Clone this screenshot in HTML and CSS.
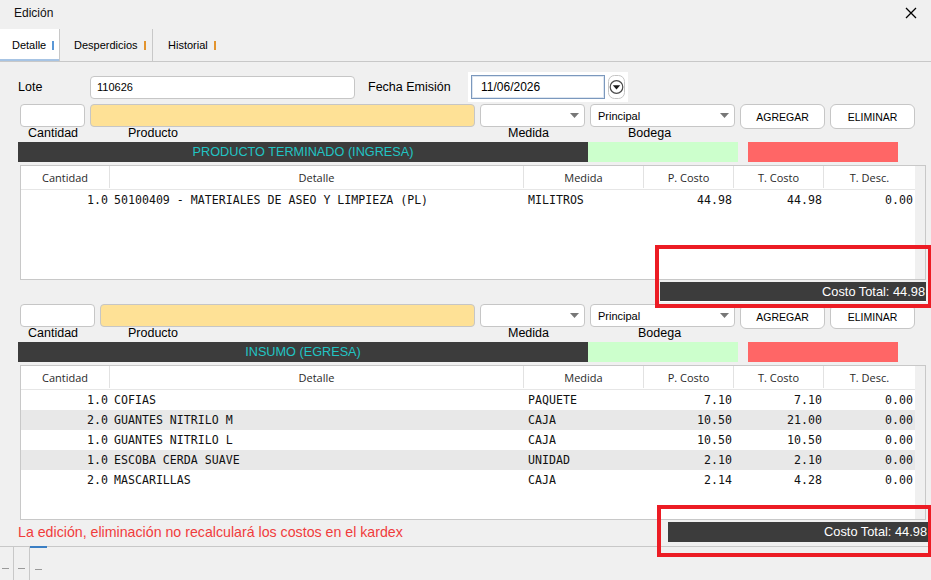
FILE: index.html
```html
<!DOCTYPE html>
<html lang="es">
<head>
  <meta charset="UTF-8" />
  <title>Edición</title>
  <link rel="stylesheet" href="styles.css">
</head>
<body>
<div class="window">

  <div class="titlebar">
    <span class="title">Edición</span>
    <svg class="close" viewBox="0 0 12 12" width="12" height="12">
      <path d="M1 1 L11 11 M11 1 L1 11" stroke="#000" stroke-width="1.3" fill="none"/>
    </svg>
  </div>

  <div class="tabs">
    <div class="tab tab-1 active">Detalle<span class="bar blue"></span></div>
    <div class="tab tab-2">Desperdicios<span class="bar"></span></div>
    <div class="tab tab-3">Historial<span class="bar"></span></div>
  </div>

  <div class="head-row">
    <span class="lbl-lote">Lote</span>
    <div class="field lote-input">110626</div>
    <span class="lbl-fecha">Fecha Emisión</span>
    <div class="date-box">
      <div class="date-field">11/06/2026</div>
      <svg class="date-btn" viewBox="0 0 17 24" width="17" height="24">
        <rect x="0.5" y="0.5" width="16" height="23" rx="6" fill="#fff" stroke="#c4c4c4"/>
        <circle cx="8.5" cy="12" r="6.3" fill="#fff" stroke="#4a4a4a" stroke-width="1.2"/>
        <path d="M4.8 10.2 L12.2 10.2 L8.5 14.4 Z" fill="#1a1a1a"/>
      </svg>
    </div>
  </div>

  <!-- producto terminado -->
  <div class="entry-row">
    <div class="field qty"></div>
    <div class="field product"></div>
    <div class="field select medida"><svg class="caret" viewBox="0 0 9 5" width="9" height="5"><path d="M0 0 L9 0 L4.5 5 Z" fill="#777"/></svg></div>
    <div class="field select bodega">Principal<svg class="caret" viewBox="0 0 9 5" width="9" height="5"><path d="M0 0 L9 0 L4.5 5 Z" fill="#777"/></svg></div>
    <div class="btn">AGREGAR</div>
    <div class="btn">ELIMINAR</div>
  </div>
  <div class="entry-labels">
    <span class="l-cant">Cantidad</span>
    <span class="l-prod">Producto</span>
    <span class="l-med">Medida</span>
    <span>Bodega</span>
  </div>
  <div class="band">
    <div class="band-title">PRODUCTO TERMINADO (INGRESA)</div>
    <div class="band-green"></div>
    <div class="band-red"></div>
  </div>
  <div class="grid grid-top">
    <div class="grid-body">
      <div class="grid-head">
        <div>Cantidad</div><div>Detalle</div><div>Medida</div><div>P. Costo</div><div>T. Costo</div><div>T. Desc.</div>
      </div>
      <div class="grid-row">
        <div class="num">1.0</div><div class="txt">50100409 - MATERIALES DE ASEO Y LIMPIEZA (PL)</div><div class="txt">MILITROS</div><div class="num">44.98</div><div class="num">44.98</div><div class="num">0.00</div>
      </div>
    </div>
  </div>
  <div class="totals">
    <div class="total-bar">Costo Total: 44.98</div>
  </div>

  <!-- insumo -->
  <div class="entry-row second">
    <div class="field qty"></div>
    <div class="field product"></div>
    <div class="field select medida"><svg class="caret" viewBox="0 0 9 5" width="9" height="5"><path d="M0 0 L9 0 L4.5 5 Z" fill="#777"/></svg></div>
    <div class="field select bodega">Principal<svg class="caret" viewBox="0 0 9 5" width="9" height="5"><path d="M0 0 L9 0 L4.5 5 Z" fill="#777"/></svg></div>
    <div class="btn">AGREGAR</div>
    <div class="btn">ELIMINAR</div>
  </div>
  <div class="entry-labels second">
    <span class="l-cant">Cantidad</span>
    <span class="l-prod">Producto</span>
    <span class="l-med">Medida</span>
    <span>Bodega</span>
  </div>
  <div class="band">
    <div class="band-title">INSUMO (EGRESA)</div>
    <div class="band-green"></div>
    <div class="band-red"></div>
  </div>
  <div class="grid grid-bottom">
    <div class="grid-body">
      <div class="grid-head">
        <div>Cantidad</div><div>Detalle</div><div>Medida</div><div>P. Costo</div><div>T. Costo</div><div>T. Desc.</div>
      </div>
      <div class="grid-row">
        <div class="num">1.0</div><div class="txt">COFIAS</div><div class="txt">PAQUETE</div><div class="num">7.10</div><div class="num">7.10</div><div class="num">0.00</div>
      </div>
      <div class="grid-row">
        <div class="num">2.0</div><div class="txt">GUANTES NITRILO M</div><div class="txt">CAJA</div><div class="num">10.50</div><div class="num">21.00</div><div class="num">0.00</div>
      </div>
      <div class="grid-row">
        <div class="num">1.0</div><div class="txt">GUANTES NITRILO L</div><div class="txt">CAJA</div><div class="num">10.50</div><div class="num">10.50</div><div class="num">0.00</div>
      </div>
      <div class="grid-row">
        <div class="num">1.0</div><div class="txt">ESCOBA CERDA SUAVE</div><div class="txt">UNIDAD</div><div class="num">2.10</div><div class="num">2.10</div><div class="num">0.00</div>
      </div>
      <div class="grid-row">
        <div class="num">2.0</div><div class="txt">MASCARILLAS</div><div class="txt">CAJA</div><div class="num">2.14</div><div class="num">4.28</div><div class="num">0.00</div>
      </div>
    </div>
  </div>
  <div class="bottom-row">
    <span class="warning">La edición, eliminación no recalculará los costos en el kardex</span>
    <div class="total-bar wide">Costo Total: 44.98</div>
  </div>

  <div class="footer">
    <div class="mini"><span class="dash"></span></div>
    <div class="mini"><span class="dash"></span></div>
    <div class="mini current"><span class="dash"></span></div>
  </div>

  <!-- highlight marks -->
  <div class="mark mark-1"></div>
  <div class="mark mark-2"></div>

</div>
</body>
</html>
```

FILE: styles.css
```css
* {
  box-sizing: border-box;
}
body {
  margin: 0;
  background: #f0f0f0;
  font-family: "Liberation Sans", Arial, sans-serif;
  font-size: 12.5px;
  color: #000;
  width: 931px;
  height: 580px;
  overflow: hidden;
}
.window {
  position: relative;
  height: 580px;
}

/* title + tabs */
.titlebar {
  height: 29px;
  display: flex;
  align-items: center;
  justify-content: space-between;
  padding: 0 14px 3px 14px;
}
.title {
  font-size: 12px;
  color: #111;
}
.tabs {
  display: flex;
  height: 33px;
  border-bottom: 1px solid #c8c8c8;
}
.tab {
  height: 32px;
  display: flex;
  align-items: center;
  font-size: 11px;
  border-right: 1px solid #c8c8c8;
}
.tab-1 {
  width: 60px;
  padding-left: 12px;
}
.tab-2 {
  width: 93px;
  padding-left: 14px;
}
.tab-3 {
  width: 90px;
  padding-left: 15px;
  border-right: none;
}
.tab.active {
  background: #fff;
  box-shadow: inset 0 -2px 0 #a7c4e4;
}
.tab .bar {
  display: inline-block;
  width: 2px;
  height: 9px;
  margin-left: 6px;
  background: #e3942e;
}
.tab .bar.blue {
  background: #5a97d6;
}

/* header row */
.head-row {
  display: flex;
  align-items: center;
  height: 30px;
  margin-top: 10px;
}
.lbl-lote {
  margin-left: 18px;
  width: 72px;
}
.lbl-fecha {
  margin-left: 13px;
  width: 100px;
}
.field {
  background: #fff;
  border: 1px solid #c6c6c6;
  border-radius: 4px;
  height: 23px;
  display: flex;
  align-items: center;
  padding-left: 6px;
  font-size: 11px;
}
.lote-input {
  width: 265px;
}
.date-box {
  width: 160px;
  height: 30px;
  background: #fff;
  display: flex;
  align-items: center;
  padding-left: 3px;
}
.date-field {
  width: 134px;
  height: 24px;
  border: 1px solid #7b98bd;
  box-shadow: inset 0 0 0 1px #dde6f1;
  padding-left: 9px;
  display: flex;
  align-items: center;
  font-size: 12px;
}
.date-btn {
  margin-left: 3px;
}

/* entry rows */
.entry-row {
  display: flex;
  gap: 5px;
  height: 23px;
  margin-top: 2px;
  padding-left: 20px;
}
.entry-row.second {
  margin-top: 0;
}
.qty {
  width: 65px;
}
.product {
  width: 385px;
  background: #fee196;
}
.second .qty {
  width: 75px;
}
.second .product {
  width: 375px;
}
.select {
  padding-right: 5px;
}
.select .caret {
  margin-left: auto;
}
.medida {
  width: 105px;
}
.bodega {
  width: 145px;
  padding-left: 7px;
}
.btn {
  width: 85px;
  height: 25px;
  background: #fff;
  border: 1px solid #c6c6c6;
  border-radius: 6px;
  display: flex;
  align-items: center;
  justify-content: center;
  font-size: 10.5px;
}
.entry-labels {
  display: flex;
  height: 15px;
  line-height: 12px;
  padding-left: 28px;
}
.l-cant {
  width: 100px;
}
.l-prod {
  width: 380px;
}
.l-med {
  width: 120px;
}
.second .l-med {
  width: 130px;
}

/* coloured band */
.band {
  display: flex;
  height: 20px;
  margin-left: 18px;
}
.band-title {
  width: 570px;
  background: #3c3c3c;
  color: #22c4c4;
  text-align: center;
  line-height: 20px;
  font-size: 12.7px;
}
.band-green {
  width: 150px;
  background: #ccffcc;
}
.band-red {
  width: 150px;
  margin-left: 10px;
  background: #ff6666;
}

/* tables */
.grid {
  margin-top: 3px;
  margin-left: 20px;
  width: 906px;
  border: 1px solid #c8c8c8;
  background: #f0f0f0;
}
.grid-top {
  height: 115px;
}
.grid-bottom {
  height: 155px;
}
.grid-body {
  width: 894px;
  height: 100%;
  background: #fff;
}
.grid-head,
.grid-row {
  display: grid;
  grid-template-columns: 89px 414px 120px 90px 90px 91px;
}
.grid-head {
  height: 24px;
  border-bottom: 1px solid #e6e6e6;
  font-family: "Open Sans", sans-serif;
  font-size: 11px;
  color: #2a2a2a;
  padding-bottom: 1px;
}
.grid-head div {
  display: flex;
  align-items: center;
  justify-content: center;
  border-right: 1px solid #e2e2e2;
}
.grid-head div:last-child {
  border-right: none;
}
.grid-row {
  height: 20px;
  line-height: 20px;
  font-family: "DejaVu Sans Mono", monospace;
  font-size: 11.6px;
  color: #111;
}
.grid-row:nth-child(odd) {
  background: #e8e8e8;
}
.grid-row .num {
  text-align: right;
  padding-right: 2px;
}
.grid-row .txt {
  padding-left: 4px;
  white-space: nowrap;
}

/* totals */
.totals {
  height: 24px;
  display: flex;
  justify-content: flex-end;
  padding-right: 5px;
}
.total-bar {
  width: 266px;
  height: 20px;
  margin-top: 2px;
  background: #3c3c3c;
  border-bottom: 1px solid #fff;
  color: #fff;
  text-align: right;
  line-height: 19px;
  padding-right: 1px;
  font-size: 12.8px;
}
.bottom-row {
  height: 26px;
  display: flex;
  justify-content: space-between;
  padding-left: 18px;
  padding-right: 3px;
}
.warning {
  margin-top: 2px;
  line-height: 20px;
  font-size: 14.2px;
  color: #f03c3c;
}
.total-bar.wide {
  width: 260px;
  border-bottom: none;
  line-height: 20px;
}

/* footer strip */
.footer {
  display: flex;
  height: 34px;
  border-top: 1px solid #c8c8c8;
}
.mini {
  display: flex;
  justify-content: center;
  padding-top: 21px;
  border-right: 1px solid #c8c8c8;
}
.mini:nth-child(1) {
  width: 14px;
  padding-right: 2px;
}
.mini:nth-child(2) {
  width: 16px;
}
.mini.current {
  width: 17px;
  border-right: none;
  border-top: 2px solid #3b7fc4;
  margin-top: -1px;
}
.dash {
  width: 7px;
  height: 1px;
  background: #9a9a9a;
}

/* red highlight boxes */
.mark {
  position: absolute;
  border: 4px solid #ec1c24;
}
.mark-1 {
  left: 655px;
  top: 245px;
  width: 277px;
  height: 63px;
}
.mark-2 {
  left: 657px;
  top: 505px;
  width: 275px;
  height: 52px;
}
```
